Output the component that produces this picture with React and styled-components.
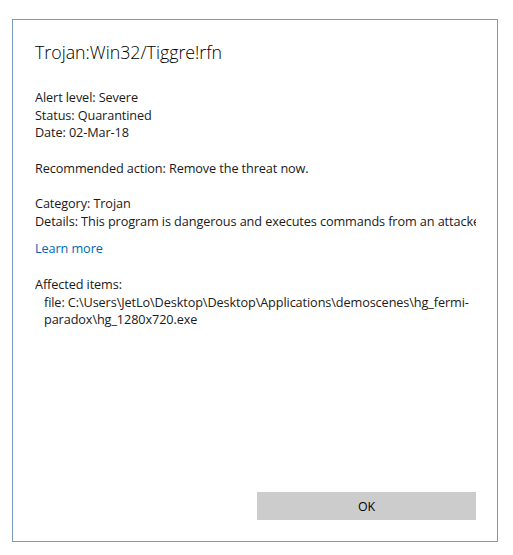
import React from 'react';
import styled, { createGlobalStyle } from 'styled-components';

const GlobalStyle = createGlobalStyle`
  html, body {
    margin: 0;
    padding: 0;
    background: #ffffff;
  }
`;

const Page = styled.div`
  padding: 19px 0 0 12px;
  font-family: 'Open Sans', 'Noto Sans', sans-serif;
`;

const Dialog = styled.div`
  box-sizing: border-box;
  width: 486px;
  height: 523px;
  border: 1px solid #7a9bbd;
  background: #ffffff;
  display: flex;
  flex-direction: column;
  padding: 18px 21px 21px 22px;
`;

const Title = styled.h1`
  margin: 0 0 23px 0;
  font-size: 17.8px;
  font-weight: 300;
  line-height: 28px;
  color: #000;
`;

const Content = styled.div`
  flex: 1;
  overflow: hidden;
`;

const Section = styled.div`
  margin-bottom: ${(p) => p.gap || 18}px;
`;

const Line = styled.div`
  font-size: 12.7px;
  line-height: 17.6px;
  color: #1a1a1a;
  white-space: nowrap;
  letter-spacing: -0.1px;
  padding-left: ${(p) => (p.indent ? 9 : 0)}px;
`;

const Link = styled.a`
  display: block;
  font-size: 12.7px;
  line-height: 17.6px;
  letter-spacing: -0.1px;
  color: #0067b8;
  text-decoration: none;
  cursor: pointer;
`;

const Footer = styled.div`
  display: flex;
  justify-content: flex-end;
`;

const Button = styled.button`
  width: 219px;
  height: 28px;
  background: #cccccc;
  border: 2px solid #cccccc;
  font-family: inherit;
  font-size: 12.4px;
  color: #000;
  padding: 0;
`;

export default function App() {
  return (
    <>
      <GlobalStyle />
      <Page>
        <Dialog>
          <Title>Trojan:Win32/Tiggre!rfn</Title>
          <Content>
            <Section>
              <Line>Alert level: Severe</Line>
              <Line>Status: Quarantined</Line>
              <Line>Date: 02-Mar-18</Line>
            </Section>
            <Section>
              <Line>Recommended action: Remove the threat now.</Line>
            </Section>
            <Section gap={9}>
              <Line>Category: Trojan</Line>
              <Line>Details: This program is dangerous and executes commands from an attacker.</Line>
            </Section>
            <Section gap={19}>
              <Link>Learn more</Link>
            </Section>
            <Section>
              <Line>Affected items:</Line>
              <Line indent>file: C:\Users\JetLo\Desktop\Desktop\Applications\demoscenes\hg_fermi-</Line>
              <Line indent>paradox\hg_1280x720.exe</Line>
            </Section>
          </Content>
          <Footer>
            <Button>OK</Button>
          </Footer>
        </Dialog>
      </Page>
    </>
  );
}
